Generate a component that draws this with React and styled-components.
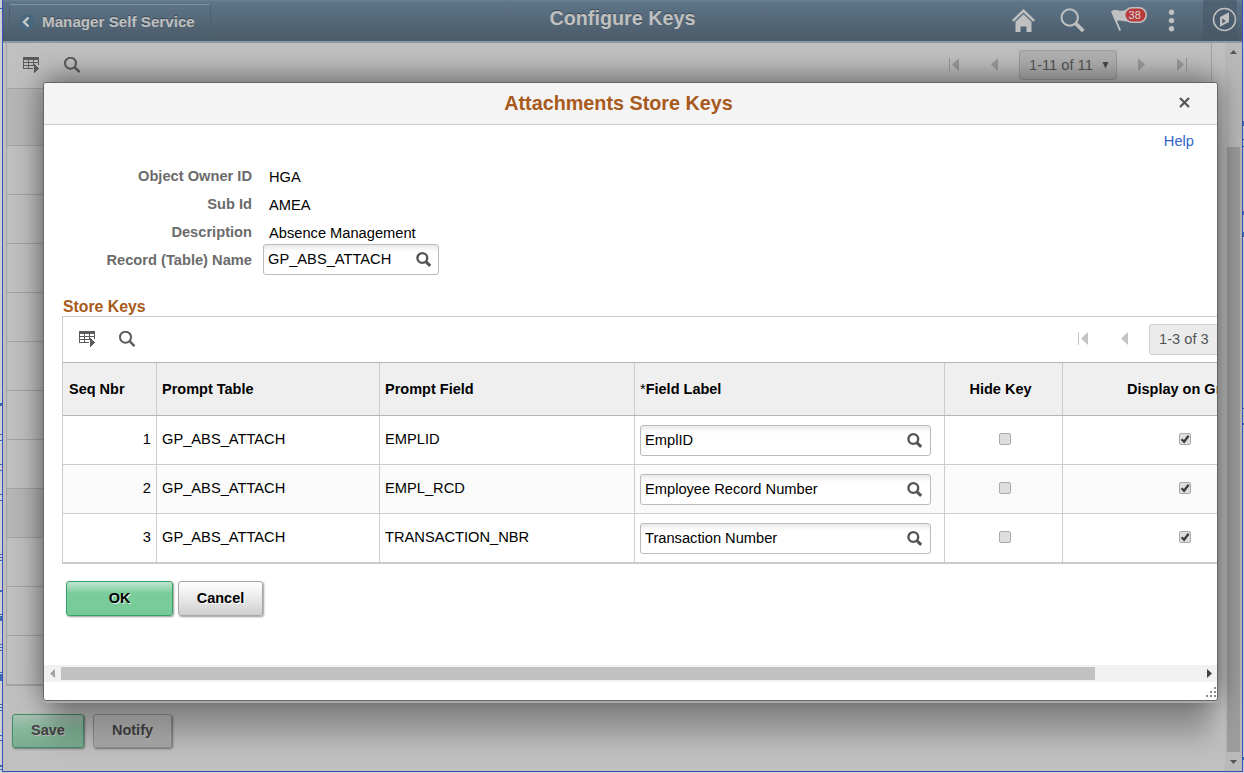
import React from "react";
import styled, { createGlobalStyle, css } from "styled-components";

const GlobalStyle = createGlobalStyle`
  * {
    box-sizing: border-box;
  }
  body {
    margin: 0;
    overflow: hidden;
    font-family: "Liberation Sans", Arial, sans-serif;
    font-size: 14.67px;
  }
`;

const Page = styled.div`
  position: relative;
  display: flex;
  width: 1244px;
  height: 773px;
  overflow: hidden;
  background: #cdd0d4;
`;
const Edge = styled.svg`
  flex: none;
  width: ${({ $w }) => $w}px;
  height: 773px;
`;
const Frame = styled.div`
  width: 1241px;
  height: 772px;
  border: 1px solid #3a50b4;
  border-top: none;
  background: #c0c0c0;
`;
const TopBar = styled.header`
  display: flex;
  height: 43px;
  color: #c0c0c0;
  background: linear-gradient(#6d7f98 0, #5d7488 2px, #4a5b68 100%);
  border-bottom: 2px solid #8c98a6;
`;
const TopSide = styled.div`
  display: flex;
  flex: 1;
  align-items: center;
  justify-content: ${({ $end }) => ($end ? "flex-end" : "flex-start")};
`;
const BackButton = styled.button`
  display: flex;
  align-items: center;
  gap: 7px;
  width: 202px;
  height: 35px;
  margin: 2px 0 0 6px;
  padding: 0 0 0 9px;
  border: 1px solid #4b6073;
  border-top-color: #7f93a1;
  border-radius: 3px;
  background: transparent;
  color: #c0c0c0;
  font: bold 15.2px "Liberation Sans", Arial, sans-serif;
  text-shadow: 0 -1px #3d4a55;
`;
const PageTitle = styled.h1`
  margin: 0;
  padding-top: 6px;
  font-size: 19.8px;
  line-height: 24px;
  text-shadow: 0 -1px #3d4a55;
`;
const TopIcons = styled.svg`
  width: 240px;
  height: 41px;
  flex: none;
`;
const PageBody = styled.div`
  display: flex;
  height: 728px;
`;
const PageContent = styled.div`
  flex: 1;
  padding-left: 3px;
`;
const BackGrid = styled.div`
  width: 1206px;
  border: 1px solid #a3a3a3;
  border-top: none;
  border-bottom-width: 2px;
`;
const Toolbar = styled.div`
  display: flex;
  align-items: center;
  height: ${({ $h }) => $h}px;
  padding: ${({ $pad }) => $pad};
  border-bottom: 1px solid ${({ $line }) => $line};
  color: #666;
`;
const ToolIcon = styled.svg`
  width: 17px;
  height: 17px;
  flex: none;
  margin-right: ${({ $gap }) => $gap || 0}px;
`;
const Pager = styled.div`
  display: flex;
  align-items: center;
  margin-left: auto;
  color: ${({ $dim }) => ($dim ? "#9b9b9b" : "#c4c4c4")};
`;
const PageCount = styled.div`
  display: flex;
  align-items: center;
  gap: 9px;
  flex: none;
  width: 98px;
  height: ${({ $dim }) => ($dim ? 30 : 31)}px;
  padding-left: 9px;
  border: 1px solid ${({ $dim }) => ($dim ? "#9d9d9d" : "#cfcfcf")};
  border-radius: 3px;
  background: ${({ $dim }) => ($dim ? "#b1b1b1" : "#ebebeb")};
  color: #555;
  white-space: nowrap;
`;
const PagerSpace = styled.span`
  width: 20px;
`;
const BackRow = styled.div`
  height: ${({ $h }) => $h || 49}px;
  background: ${({ $dark }) => ($dark ? "#b6b6b6" : "transparent")};
  border-bottom: ${({ $last }) => ($last ? "none" : "1px solid #a3a3a3")};
`;
const ButtonRow = styled.div`
  display: flex;
  gap: ${({ $gap }) => $gap}px;
  padding: ${({ $pad }) => $pad};
`;
const Button = styled.button`
  width: ${({ $w }) => $w}px;
  height: ${({ $h }) => $h || 35}px;
  padding: 0 0 2px;
  border: 1px solid #a8a8a8;
  border-radius: 3px;
  background: linear-gradient(#fff, #f0f0f0 35%, #cfcfcf);
  box-shadow: 1px 1px 2px rgba(0, 0, 0, 0.4);
  color: #000;
  font: bold 14.5px "Liberation Sans", Arial, sans-serif;
  text-shadow: 1px 1px #fff;
  ${({ $primary }) =>
    $primary &&
    css`
      border-color: #36a068;
      background: linear-gradient(#bfe6d0, #7acc9b 35%, #75cb98);
      text-shadow: 1px 1px rgba(255, 255, 255, 0.8);
    `}
  ${({ $dim }) =>
    $dim &&
    css`
      border-color: #909090;
      background: linear-gradient(#bfbfbf, #a9a9a9);
      color: #444;
      text-shadow: 1px 1px #bbb;
    `}
  ${({ $dim, $primary }) =>
    $dim &&
    $primary &&
    css`
      border-color: #3f8f66;
      background: linear-gradient(#a9c0b3, #84b89b 45%, #7cab91);
    `}
`;
const ScrollColumn = styled.div`
  display: flex;
  flex-direction: column;
  align-items: center;
  width: 17px;
  padding: 7px 2px 5px 1px;
  background: #b9b9b9;
  color: #444;
`;
const ScrollThumb = styled.div`
  width: 13px;
  height: 605px;
  margin: 93px 0 8px;
  background: #9c9c9c;
`;

const Modal = styled.section`
  position: absolute;
  left: 43px;
  top: 82px;
  display: flex;
  flex-direction: column;
  width: 1175px;
  height: 619px;
  border: 1px solid #666;
  border-radius: 3px;
  background: #fff;
  box-shadow: 0 2px 0 #ababab, 0 -3px 30px rgba(0, 0, 0, 0.52), 0 44px 24px -8px rgba(0, 0, 0, 0.22);
`;
const ModalHeader = styled.div`
  display: flex;
  align-items: center;
  height: 42px;
  padding: 0 27px 1px 14px;
  border-bottom: 1px solid #ccc;
  border-radius: 3px 3px 0 0;
  background: #f4f4f4;
`;
const ModalTitle = styled.h2`
  flex: 1;
  margin: 0;
  color: #a85a1c;
  font-size: 19.8px;
  text-align: center;
`;
const CloseIcon = styled.svg`
  width: 11px;
  height: 11px;
  margin-bottom: 2px;
`;
const ModalBody = styled.div`
  height: 540px;
  overflow: hidden;
`;
const HelpLink = styled.div`
  padding: 7px 23px 0 0;
  color: #3264c8;
  line-height: 18px;
  text-align: right;
`;
const Form = styled.div`
  display: grid;
  grid-template-columns: 208px 176px;
  column-gap: 11px;
  padding-top: 12px;
  grid-auto-rows: 28px;
`;
const Label = styled.label`
  color: #6b6b6b;
  font-weight: bold;
  line-height: 28px;
  text-align: right;
`;
const Value = styled.div`
  padding-left: 6px;
  line-height: 30px;
`;
const Lookup = styled.div`
  display: flex;
  align-items: center;
  justify-content: space-between;
  width: ${({ $w }) => $w}px;
  height: 31px;
  margin-top: ${({ $lift }) => ($lift ? -2 : 0)}px;
  padding: 0 ${({ $lift }) => ($lift ? 6 : 7)}px ${({ $lift }) => $lift || 0}px 4px;
  border: 1px solid #bbb;
  border-radius: 3px;
  background: #fff;
  box-shadow: inset 0 6px 6px -4px rgba(0, 0, 0, 0.12);
`;
const GroupTitle = styled.h3`
  margin: 0;
  padding: 23px 0 0 19px;
  color: #a85a1c;
  font-size: 15.8px;
  line-height: 19px;
`;
const Grid = styled.div`
  width: 1400px;
  margin-left: 18px;
  border: 1px solid #ccc;
  border-bottom: 2px solid #ccc;
`;
const GridRow = styled.div`
  display: grid;
  grid-template-columns: 94px 223px 255px 310px 118px 1fr;
  height: ${({ $head }) => ($head ? 53 : 49)}px;
  background: ${({ $head, $alt }) => ($head ? "#efefef" : $alt ? "#fafafa" : "#fff")};
  border-bottom: 1px solid ${({ $head }) => ($head ? "#b5b5b5" : "#ccc")};
  font-size: ${({ $head }) => ($head ? "14.5px" : "inherit")};
  font-weight: ${({ $head }) => ($head ? "bold" : "normal")};
  &:last-child {
    height: 48px;
    border-bottom: none;
  }
`;
const Cell = styled.div`
  display: flex;
  align-items: center;
  justify-content: ${({ $align }) => $align || "flex-start"};
  padding: ${({ $pad }) => $pad || "0 5px 2px"};
  border-right: 1px solid #ccc;
`;
const Required = styled.span`
  font-weight: normal;
`;
const CheckBox = styled.svg`
  width: 13px;
  height: 13px;
`;
const HScroll = styled.div`
  display: flex;
  align-items: center;
  height: 17px;
  padding: 0 5px 0 6px;
  background: #f1f1f1;
`;
const HThumb = styled.div`
  width: 1034px;
  height: 13px;
  margin: 0 auto 0 6px;
  background: #c1c1c1;
`;
const Tri = styled.svg`
  width: ${({ $w }) => $w || 5}px;
  height: ${({ $h }) => $h || 9}px;
  flex: none;
`;
const Footer = styled.div`
  display: flex;
  justify-content: flex-end;
  padding: 5px 1px 0 0;
`;

const rows = [
  { seq: 1, table: "GP_ABS_ATTACH", field: "EMPLID", label: "EmplID" },
  { seq: 2, table: "GP_ABS_ATTACH", field: "EMPL_RCD", label: "Employee Record Number" },
  { seq: 3, table: "GP_ABS_ATTACH", field: "TRANSACTION_NBR", label: "Transaction Number" },
];

const leftMarks = [[8, 1], [403, 3], [434, 1], [440, 1], [464, 1], [470, 1], [494, 1], [500, 1], [554, 1], [557, 1], [560, 1], [590, 2], [614, 1], [616, 5], [644, 1], [647, 1], [650, 1], [672, 1], [674, 7], [704, 1], [707, 1], [710, 1], [735, 1], [740, 1], [765, 2], [769, 1]];
const rightMarks = [[121, 5], [139, 1], [146, 1], [211, 4], [232, 5], [408, 1], [423, 2], [757, 3]];

function Marks({ w, marks }) {
  return (
    <Edge $w={w}>
      {marks.map(([y, h]) => (
        <rect key={y} x="0" y={y} width={w} height={h} fill="#3d6db0" />
      ))}
    </Edge>
  );
}

function GridIcon({ gap }) {
  return (
    <ToolIcon viewBox="0 0 17 17" $gap={gap} shapeRendering="crispEdges">
      <path d="M0 0h16v3H0zM0 3h1v9H0zM15 3h1v5h-1zM5 3h1v9H5zM10 3h1v5h-1zM0 5h16v1H0zM0 8h11v1H0zM0 11h10v1H0z" fill="#5c5c5c" />
      <path d="M11 7l5 4.5-5 4.5z" fill="#5c5c5c" />
    </ToolIcon>
  );
}

function SearchIcon() {
  return (
    <ToolIcon viewBox="0 0 17 17">
      <circle cx="6.5" cy="6.2" r="5.5" fill="none" stroke="#5c5c5c" strokeWidth="2" />
      <path d="M10.5 10.2l5 5" stroke="#5c5c5c" strokeWidth="2.4" />
    </ToolIcon>
  );
}

function LookupIcon() {
  return (
    <ToolIcon viewBox="0 0 17 17">
      <circle cx="7.3" cy="7" r="4.9" fill="none" stroke="#555" strokeWidth="2.4" />
      <path d="M10.8 10.6l4.4 4.3" stroke="#555" strokeWidth="3" />
    </ToolIcon>
  );
}

function Arrow({ first, last, right, mr }) {
  return (
    <svg width="11" height="13" viewBox="0 0 11 13" style={{ marginRight: mr, marginBottom: 1, flex: "none" }}>
      {first && <path d="M0 0h1v13H0z" fill="currentColor" />}
      {last && <path d="M10 0h1v13h-1z" fill="currentColor" />}
      {right ? <path d="M1 0l7 6.5L1 13z" fill="currentColor" /> : <path d="M10 0L3 6.5 10 13z" fill="currentColor" />}
    </svg>
  );
}

function Check({ checked }) {
  return (
    <CheckBox viewBox="0 0 13 13">
      <rect x="0.5" y="0.5" width="11" height="11" rx="1.5" fill="#dedede" stroke="#a9a9a9" />
      {checked && <path d="M2.6 6.2l2.5 2.6L9.6 2.8" fill="none" stroke="#3c3c3c" strokeWidth="2.3" />}
    </CheckBox>
  );
}

function HeaderIcons() {
  return (
    <TopIcons viewBox="1002 0 240 41" fill="#c0c0c0">
      <path d="M1023.5 9l11.5 11-1.7 1.8-9.8-9.4-9.8 9.4-1.7-1.8z" />
      <path d="M1023.5 14.2l8 7.6V32h-5v-5.5h-6V32h-5V21.8z" />
      <circle cx="1069.7" cy="17.5" r="8.2" fill="none" stroke="#c0c0c0" strokeWidth="2" />
      <path d="M1075.8 23.5l7.5 7.5" stroke="#c0c0c0" strokeWidth="3.8" />
      <path d="M1111 11.5c4-2.5 6-1 9-.8 3 .2 4-.6 6-.4l1 11c-3 .8-5-1.5-10-.5l4 9.5-1.7.7z" />
      <rect x="1124" y="7" width="23" height="16" rx="8" />
      <rect x="1125.5" y="8.5" width="20" height="13" rx="6.5" fill="#b83a3a" />
      <text x="1134.7" y="19" textAnchor="middle" fontSize="11" fill="#d8d8d8">38</text>
      <circle cx="1171.5" cy="12.3" r="2.7" />
      <circle cx="1171.5" cy="20.6" r="2.7" />
      <circle cx="1171.5" cy="28.8" r="2.7" />
      <path d="M1203 0h34v41h-34z" fill="#465665" fillOpacity="0.6" />
      <circle cx="1224.5" cy="19.5" r="11" fill="none" stroke="#c0c0c0" strokeWidth="1.5" />
      <path d="M1229 12.3v9.8l-9 4.6v-9.8zM1222.3 18.5v5l3.6-2.4z" fillRule="evenodd" />
    </TopIcons>
  );
}

function App() {
  return (
    <Page>
      <GlobalStyle />
      <Marks w={2} marks={leftMarks} />
      <Frame>
        <TopBar>
          <TopSide>
            <BackButton>
              <svg width="16" height="16" viewBox="0 0 16 16">
                <circle cx="8" cy="8" r="8" fill="#48677f" />
                <path d="M9.5 3.5L5 8l4.5 4.5" fill="none" stroke="#c9c9c9" strokeWidth="2.4" />
              </svg>
              Manager Self Service
            </BackButton>
          </TopSide>
          <PageTitle>Configure Keys</PageTitle>
          <TopSide $end>
            <HeaderIcons />
          </TopSide>
        </TopBar>
        <PageBody>
          <PageContent>
            <BackGrid>
              <Toolbar $h={46} $pad="0 24px 1px 16px" $line="#a3a3a3">
                <GridIcon gap={24} />
                <SearchIcon />
                <Pager $dim>
                  <Arrow first mr={28} />
                  <Arrow mr={20} />
                  <PageCount $dim>
                    1-11 of 11
                    <Tri $w={7} $h={7} viewBox="0 0 7 7"><path d="M.5 0h6l-3 6.5z" fill="#484848" /></Tri>
                  </PageCount>
                  <PagerSpace />
                  <Arrow right mr={28} />
                  <Arrow right last />
                </Pager>
              </Toolbar>
              <BackRow $h={57} $dark />
              {Array.from({ length: 11 }, (_, i) => (
                <BackRow key={i} $h={i === 10 ? 48 : 49} $dark={i === 7} $last={i === 10} />
              ))}
            </BackGrid>
            <ButtonRow $gap={9} $pad="28px 0 0 6px">
              <Button $w={72} $h={34} $primary $dim>Save</Button>
              <Button $w={79} $h={34} $dim>Notify</Button>
            </ButtonRow>
          </PageContent>
          <ScrollColumn>
            <Tri $w={7} $h={4} viewBox="0 0 7 4"><path d="M0 4l3.5-4L7 4z" fill="#555" /></Tri>
            <ScrollThumb />
            <Tri $w={7} $h={4} viewBox="0 0 7 4"><path d="M0 0l3.5 4L7 0z" fill="#555" /></Tri>
          </ScrollColumn>
        </PageBody>
      </Frame>
      <Marks w={1} marks={rightMarks} />

      <Modal>
        <ModalHeader>
          <ModalTitle>Attachments Store Keys</ModalTitle>
          <CloseIcon viewBox="0 0 11 11">
            <path d="M1 1l9 9M10 1l-9 9" stroke="#555" strokeWidth="2.2" />
          </CloseIcon>
        </ModalHeader>
        <ModalBody>
          <HelpLink>Help</HelpLink>
          <Form>
            <Label>Object Owner ID</Label>
            <Value>HGA</Value>
            <Label>Sub Id</Label>
            <Value>AMEA</Value>
            <Label>Description</Label>
            <Value>Absence Management</Value>
            <Label>Record (Table) Name</Label>
            <Lookup $w={176} $lift={1}>
              GP_ABS_ATTACH
              <LookupIcon />
            </Lookup>
          </Form>
          <GroupTitle>Store Keys</GroupTitle>
          <Grid>
            <Toolbar $h={46} $pad="0 214px 1px 16px" $line="#b5b5b5">
              <GridIcon gap={23} />
              <SearchIcon />
              <Pager>
                <Arrow first mr={29} />
                <Arrow mr={20} />
                <PageCount>1-3 of 3</PageCount>
              </Pager>
            </Toolbar>
            <GridRow $head>
              <Cell $pad="0 5px 1px 6px">Seq Nbr</Cell>
              <Cell $pad="0 5px 1px">Prompt Table</Cell>
              <Cell $pad="0 5px 1px">Prompt Field</Cell>
              <Cell $pad="0 5px 1px"><Required>*</Required>Field Label</Cell>
              <Cell $align="center" $pad="0 6px 1px 0">Hide Key</Cell>
              <Cell $pad="0 0 1px 64px">Display on Grid</Cell>
            </GridRow>
            {rows.map((row, i) => (
              <GridRow key={row.seq} $alt={i === 1}>
                <Cell $align="flex-end">{row.seq}</Cell>
                <Cell>{row.table}</Cell>
                <Cell>{row.field}</Cell>
                <Cell $pad="0 5px">
                  <Lookup $w={291}>
                    {row.label}
                    <LookupIcon />
                  </Lookup>
                </Cell>
                <Cell $align="center" $pad="0 0 1px 3px"><Check /></Cell>
                <Cell $pad="0 0 1px 116px"><Check checked /></Cell>
              </GridRow>
            ))}
          </Grid>
          <ButtonRow $gap={5} $pad="17px 0 0 22px">
            <Button $w={107} $primary>OK</Button>
            <Button $w={85}>Cancel</Button>
          </ButtonRow>
        </ModalBody>
        <HScroll>
          <Tri viewBox="0 0 5 9"><path d="M5 0L0 4.5 5 9z" fill="#a3a3a3" /></Tri>
          <HThumb />
          <Tri viewBox="0 0 5 9"><path d="M0 0l5 4.5L0 9z" fill="#444" /></Tri>
        </HScroll>
        <Footer>
          <svg width="10" height="10" viewBox="0 0 10 10" fill="#8c8c8c" shapeRendering="crispEdges">
            <path d="M8 0h2v2H8zM4 4h2v2H4zM8 4h2v2H8zM0 8h2v2H0zM4 8h2v2H4zM8 8h2v2H8z" />
          </svg>
        </Footer>
      </Modal>
    </Page>
  );
}

export default App;
